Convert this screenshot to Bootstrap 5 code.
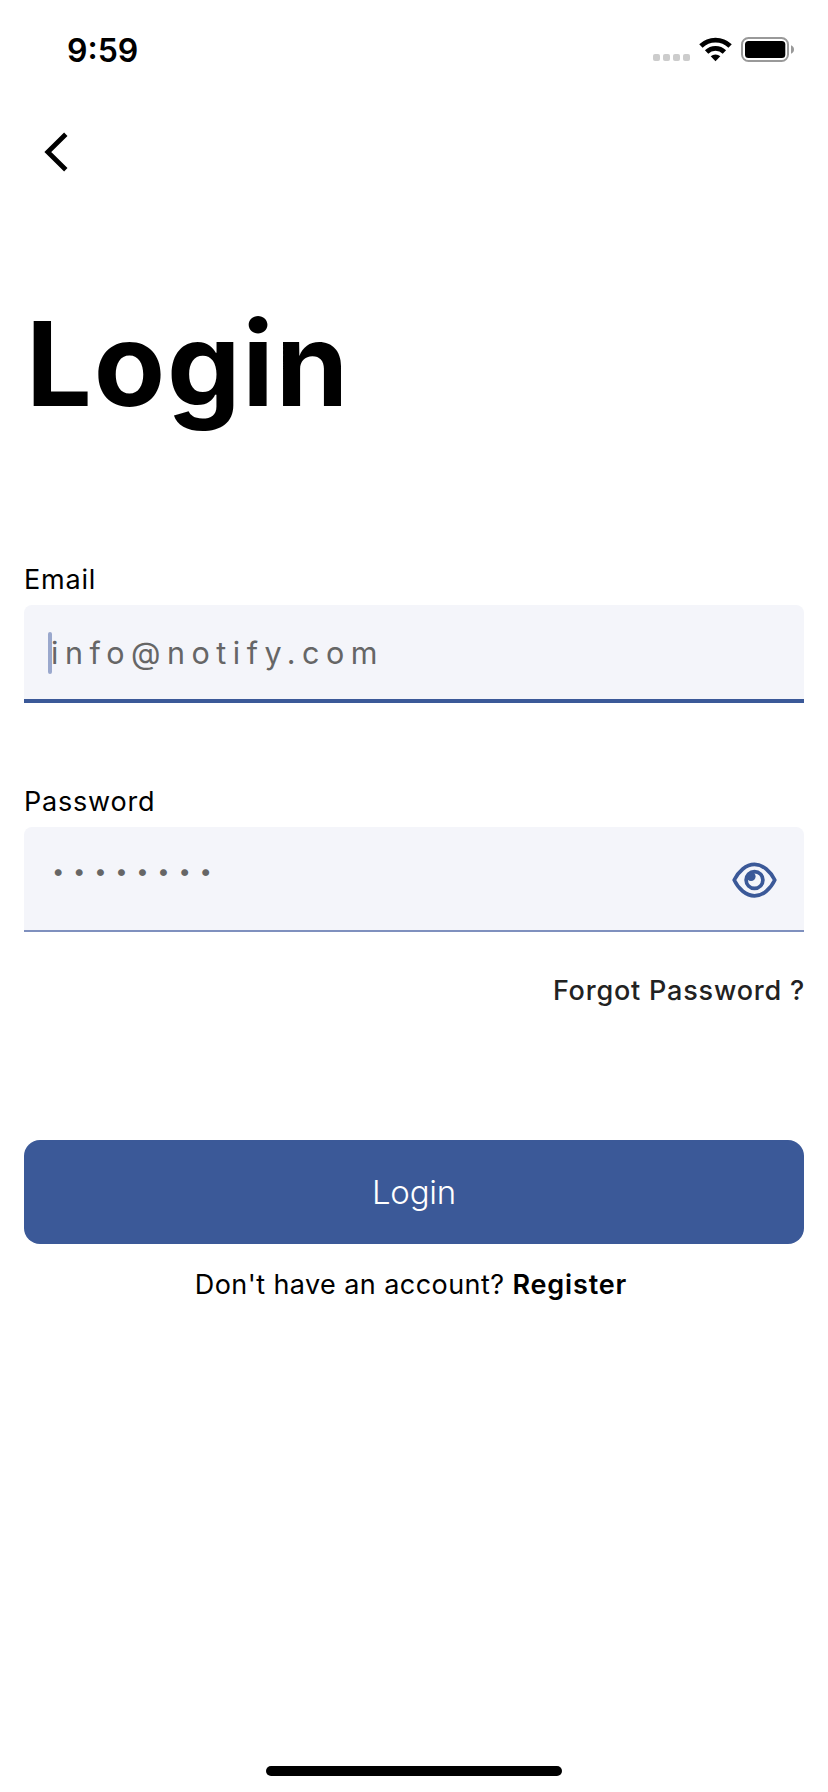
<!DOCTYPE html>
<html lang="en">
<head>
<meta charset="utf-8">
<meta name="viewport" content="width=device-width, initial-scale=1">
<title>Login</title>
<link rel="stylesheet" href="https://cdn.jsdelivr.net/npm/bootstrap@5.3.0/dist/css/bootstrap.min.css">
<style>
  body { font-family: Inter, "Liberation Sans", sans-serif; color: #000; }
  .screen { height: 1792px; padding: 0 24px; overflow: hidden; }
  .status-bar { height: 100px; padding: 0 10px 0 43px; }
  .clock { font-size: 32px; font-weight: 600; line-height: 40px; padding-top: 31px; letter-spacing: 0; }
  .back-link { width: 64px; height: 104px; padding: 0; border: 0; }
  .page-title { font-size: 116.5px; font-weight: 700; line-height: 140px; margin: 90px 0 0 2px; letter-spacing: 1.8px; }
  .field-label { font-size: 27px; line-height: 40px; margin: 0 0 5px; letter-spacing: .8px; }
  .email-group { margin-top: 126px; }
  .password-group { margin-top: 79px; }
  .field-box { background: #f4f5fa; border-radius: 8px 8px 0 0; padding: 0 24px; }
  .email-box { height: 98px; border-bottom: 4px solid #3b5998; }
  .password-box { height: 105px; border-bottom: 2px solid #7f90be; }
  .field-box .form-control { background: none; border: 0; border-radius: 0; box-shadow: none; padding: 0; height: 40px; line-height: 40px; font-size: 30.5px; letter-spacing: 6.5px; }
  .field-box .form-control::placeholder { color: #666; opacity: 1; }
  .field-box .email-input { margin-top: 2px; padding-left: 3px; }
  .field-box .dots-input { margin-top: -16px; padding-left: 4px; font-size: 22px; letter-spacing: 8.7px; }
  .caret { left: 24px; top: 27px; width: 4px; height: 42px; border-radius: 2px; background: #9aa8cd; }
  .forgot-link { font-size: 27px; font-weight: 500; line-height: 40px; color: #222; margin: 39px -1px 0 0; letter-spacing: .8px; }
  .login-btn { margin-top: 129px; height: 104px; border: 0; border-radius: 16px; background: #3b5998; color: #fff; font-size: 33px; font-weight: 300; letter-spacing: -.2px; padding: 2px 0 0; }
  .register-line { margin: 21px 6px 0 0; font-size: 27px; line-height: 40px; letter-spacing: .42px; }
  .register-line a { letter-spacing: .85px; color: #000; }
  .home-bar { width: 296px; height: 10px; border-radius: 5px; background: #000; margin-bottom: 16px; }
</style>
</head>
<body>
<main class="screen d-flex flex-column">
  <header class="status-bar d-flex justify-content-between align-items-start">
    <div class="clock">9:59</div>
    <svg width="151" height="100" viewBox="0 0 151 100" aria-hidden="true">
      <g fill="#ccc">
        <rect x="10" y="54" width="7" height="7" rx="2"/><rect x="20" y="54" width="7" height="7" rx="2"/>
        <rect x="30" y="54" width="7" height="7" rx="2"/><rect x="40" y="54" width="7" height="7" rx="2"/>
      </g>
      <g fill="none" stroke="#000" stroke-width="4.8">
        <path d="M57.9 46.1A21 21 0 0 1 87.1 46.1"/>
        <path d="M63.6 52A12.8 12.8 0 0 1 81.4 52"/>
      </g>
      <path d="M72.5 61.3 67.7 56.3A7 7 0 0 1 77.3 56.3Z"/>
      <rect x="99" y="38" width="46" height="23" rx="6.5" fill="none" stroke="#999" stroke-width="2"/>
      <rect x="102" y="41" width="40.3" height="17" rx="3.5"/>
      <path d="M148 45.3Q151 46.5 151 49.5T148 53.7Z" fill="#999"/>
    </svg>
  </header>
  <button class="back-link btn" type="button" aria-label="Back">
    <svg class="d-block" width="64" height="104" viewBox="0 0 64 104" fill="none" stroke="#000" stroke-width="4.8"><path d="M41.8 34.2 23.8 52l18 17.8"/></svg>
  </button>
  <h1 class="page-title">Login</h1>
  <form class="d-flex flex-column">
    <div class="email-group">
      <label class="field-label d-block" for="email">Email</label>
      <div class="field-box email-box position-relative d-flex align-items-center">
        <span class="caret position-absolute"></span>
        <input id="email" class="form-control email-input" type="text" placeholder="info@notify.com">
      </div>
    </div>
    <div class="password-group">
      <label class="field-label d-block" for="password">Password</label>
      <div class="field-box password-box d-flex align-items-center">
        <input id="password" class="form-control dots-input" type="text" placeholder="••••••••">
        <svg class="flex-shrink-0" width="52" height="48" viewBox="0 0 52 48" fill="none" stroke="#3b5998" stroke-width="3.7" stroke-linejoin="round">
          <path d="M6.2 25C10.5 16.500 18 9.400 26.500 9.400S42.500 16.500 46.800 25C42.500 34 35 40.800 26.500 40.800S10.500 34 6.200 25Z"/>
          <circle cx="26.500" cy="25" r="8.400"/>
          <circle cx="23" cy="21.500" r="4.600" fill="#3b5998" stroke="none"/>
        </svg>
      </div>
    </div>
    <a class="forgot-link align-self-end text-decoration-none" href="#">Forgot Password ?</a>
    <button class="login-btn btn w-100" type="button">Login</button>
    <p class="register-line text-center">Don't have an account? <a class="fw-semibold text-decoration-none" href="#">Register</a></p>
  </form>
  <div class="home-bar mt-auto align-self-center"></div>
</main>
<script src="https://cdn.jsdelivr.net/npm/bootstrap@5.3.0/dist/js/bootstrap.bundle.min.js"></script>
</body>
</html>
